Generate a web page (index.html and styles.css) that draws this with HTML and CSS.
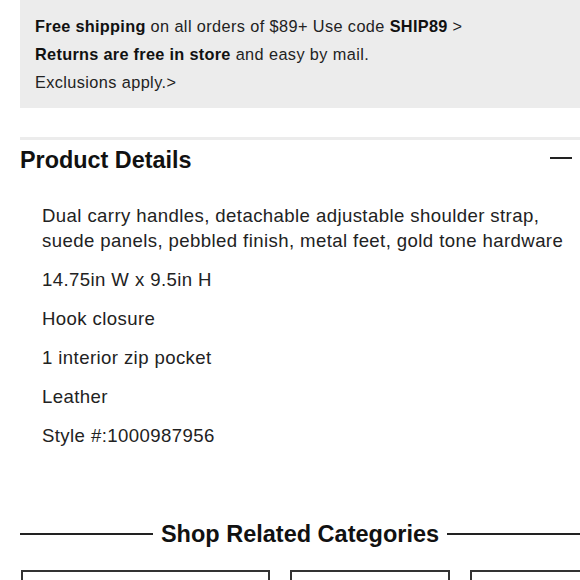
FILE: index.html
```html
<!DOCTYPE html>
<html>
<head>
<meta charset="utf-8">
<link rel="stylesheet" href="styles.css">
</head>
<body>
<div class="promo">
  <p><b>Free shipping</b> on all orders of $89+ Use code <b>SHIP89</b> &gt;</p>
  <p><b>Returns are free in store</b> and easy by mail.</p>
  <p>Exclusions apply.&gt;</p>
</div>
<div class="details">
  <div class="details-head">
    <h2>Product Details</h2>
    <span class="minus"></span>
  </div>
  <ul class="specs">
    <li>Dual carry handles, detachable adjustable shoulder strap, suede panels, pebbled finish, metal feet, gold tone hardware</li>
    <li>14.75in W x 9.5in H</li>
    <li>Hook closure</li>
    <li>1 interior zip pocket</li>
    <li>Leather</li>
    <li>Style #:1000987956</li>
  </ul>
</div>
<div class="related">
  <div class="related-title"><span class="rule"></span><h2>Shop Related Categories</h2><span class="rule"></span></div>
  <div class="cats">
    <div class="cat c1"></div>
    <div class="cat c2"></div>
    <div class="cat c3"></div>
  </div>
</div>
</body>
</html>
```
FILE: styles.css
```css
html, body { margin: 0; padding: 0; background: #fff; }
body { font-family: "Liberation Sans", Arial, sans-serif; color: #111; width: 580px; overflow: hidden; }
.promo {
  margin-left: 20px;
  background: #ececec;
  padding: 13px 15px 12px;
  height: 83px;
}
.promo p { margin: 0; font-size: 16.3px; letter-spacing: 0.4px; line-height: 27.8px; color: #222; }
.promo b { color: #111; letter-spacing: 0.3px; }
.details {
  margin: 29px 0 0 20px;
  border-top: 3px solid #ececec;
}
.details-head {
  display: flex;
  align-items: center;
  justify-content: space-between;
  height: 40px;
}
.details-head h2 { margin: 0; font-size: 23.4px; font-weight: bold; color: #111; line-height: 28px; }
.minus { width: 22px; height: 2px; background: #222; margin-right: 8px; margin-top: -4px; }
.specs { list-style: none; margin: 23px 0 0; padding: 0 0 0 22px; }
.specs li { font-size: 18.6px; letter-spacing: 0.4px; line-height: 25px; color: #222; margin-bottom: 14px; }
.related { margin-top: 72px; }
.related-title { display: flex; align-items: center; padding-left: 20px; }
.related-title .rule { flex: 1; height: 2px; background: #222; }
.related-title h2 { margin: 0 8px; font-size: 23.5px; font-weight: bold; color: #111; line-height: 28px; }
.cats { display: flex; gap: 20px; padding-left: 21px; margin-top: 22px; }
.cat { height: 60px; border: 2px solid #333; flex: none; box-sizing: border-box; }
.c1 { width: 249px; }
.c2 { width: 160px; }
.c3 { width: 200px; }
```
